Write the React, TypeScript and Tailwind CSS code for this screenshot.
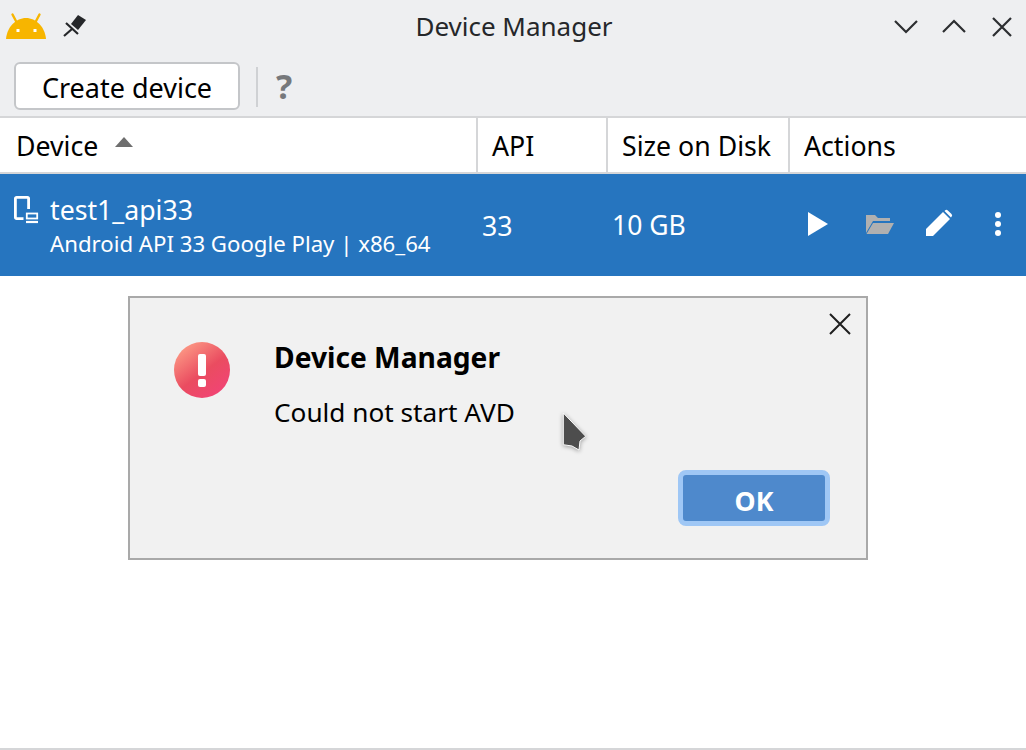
import React from 'react';

const AndroidLogo = () => (
  <svg width="42" height="30" viewBox="0 0 42 30" className="block">
    <path d="M0 30 C1 18 10 9 20 9 C30 9 39 18 40 30 Z" fill="#f7b500" />
    <path d="M11.5 15 L6.5 5.5 M28.5 15 L33.5 5.5" stroke="#f7b500" strokeWidth="2.4" strokeLinecap="round" />
    <rect x="10.5" y="20" width="3" height="3" fill="#fff" />
    <rect x="27.5" y="20" width="3" height="3" fill="#fff" />
  </svg>
);

const PinIcon = () => (
  <svg width="24" height="24" viewBox="0 0 24 24" className="block">
    <path d="M16 2 L24 7 L16 17 L9 11 Z" fill="#25272a" />
    <path d="M4 10 L16 21 M10 16 L2 23" stroke="#25272a" strokeWidth="2.2" />
  </svg>
);

const DeviceIcon = () => (
  <svg width="26" height="30" viewBox="0 0 26 30" className="block" fill="none" stroke="#fff" strokeWidth="2.8">
    <path d="M10.5 24.6 H3.6 a1.2 1.2 0 0 1 -1.2 -1.2 V4.6 a1.2 1.2 0 0 1 1.2 -1.2 H14.4 a1.2 1.2 0 0 1 1.2 1.2 V15" />
    <rect x="13.8" y="19.5" width="10.4" height="5" strokeWidth="1.8" />
    <path d="M13 28 H25" strokeWidth="2.2" />
  </svg>
);

const HeaderCell = ({ className, children }: { className: string; children: React.ReactNode }) => (
  <div className={`flex h-[54px] items-center pt-[2px] ${className}`}>{children}</div>
);

const App: React.FC = () => {
  return (
    <div className="relative flex h-[750px] w-[1026px] flex-col overflow-hidden bg-white font-['Noto_Sans',sans-serif] text-black">
      {/* title bar */}
      <div className="relative flex h-[56px] items-center bg-[#eeeff1] pl-[6px] pr-[12px]">
        <div className="mb-[8px]">
          <AndroidLogo />
        </div>
        <div className="mb-[6px] ml-[14px]">
          <PinIcon />
        </div>
        <div className="absolute inset-x-0 top-[9px] pl-[2px] text-center text-[26px] leading-[34px] text-[#25272a]">Device Manager</div>
        <div className="ml-auto mb-[3px] flex items-center gap-[24px]">
          <svg width="24" height="24" viewBox="0 0 24 24" fill="none" stroke="#2c2e31" strokeWidth="2.2"><path d="M1 6 L12 17 L23 6" /></svg>
          <svg width="24" height="24" viewBox="0 0 24 24" fill="none" stroke="#2c2e31" strokeWidth="2.2"><path d="M1 17 L12 6 L23 17" /></svg>
          <svg width="24" height="24" viewBox="0 0 24 24" fill="none" stroke="#2c2e31" strokeWidth="2.2"><path d="M3 3 L21 21 M21 3 L3 21" /></svg>
        </div>
      </div>

      {/* toolbar */}
      <div className="flex h-[60px] items-start bg-[#eeeff1] pl-[14px] pt-[6px]">
        <button className="h-[48px] w-[226px] rounded-[6px] border-2 border-[#c4c6c9] bg-white pt-[2px] text-[27px] leading-none">Create device</button>
        <div className="ml-[16px] mt-[5px] h-[40px] w-[2px] bg-[#cfd1d4]" />
        <div className="ml-[18px] mt-[-1px] text-[34px] font-bold leading-[50px] text-[#76787b]">?</div>
      </div>

      {/* table header */}
      <div className="flex h-[58px] items-center border-y-2 border-[#d5d6d8] text-[26.7px]">
        <HeaderCell className="w-[478px] border-r-2 border-[#d5d6d8] pl-[16px]">
          Device
          <svg width="20" height="12" viewBox="0 0 20 12" className="mb-[8px] ml-[16px]"><path d="M10 1 L19 11 H1 Z" fill="#6e6e6e" /></svg>
        </HeaderCell>
        <HeaderCell className="w-[130px] border-r-2 border-[#d5d6d8] pl-[14px]">API</HeaderCell>
        <HeaderCell className="w-[182px] border-r-2 border-[#d5d6d8] pl-[14px]">Size on Disk</HeaderCell>
        <HeaderCell className="pl-[14px]">Actions</HeaderCell>
      </div>

      {/* selected row */}
      <div className="flex h-[102px] items-center bg-[#2675bf] text-white">
        <div className="w-[482px] pl-[13px]">
          <div className="flex items-start pt-[4px]">
            <div className="mt-[1px] w-[37px]">
              <DeviceIcon />
            </div>
            <div>
              <div className="text-[26.7px] leading-[34px]">test1_api33</div>
              <div className="text-[22.2px] leading-[34px]">Android API 33 Google Play | x86_64</div>
            </div>
          </div>
        </div>
        <div className="w-[130px] pt-[2px] text-[26.7px]">33</div>
        <div className="w-[193px] pt-[2px] text-[26.5px]">10 GB</div>
        <div className="flex items-center">
          <svg width="24" height="24" viewBox="0 0 24 24" className="mb-[2px] ml-[1px]"><path d="M2 0 L22 12 L2 24 Z" fill="#fff" /></svg>
          <svg width="30" height="22" viewBox="0 0 30 22" className="mb-[2px] ml-[35px]">
            <path d="M1 2 H10 L13 5 H25 V8 H8 L1 20 Z" fill="#b0b0b0" />
            <path d="M8 10 H29 L23 21 H1.5 Z" fill="#b0b0b0" />
          </svg>
          <svg width="28" height="28" viewBox="0 0 28 28" className="mb-[4px] ml-[30px]">
            <path d="M1 27 V20 L18 3 L25 10 L8 27 Z" fill="#fff" />
            <path d="M20 1.5 a2 2 0 0 1 2.8 0 L26.5 5 a2 2 0 0 1 0 2.8 L26 8.5 L19.5 2 Z" fill="#fff" />
          </svg>
          <svg width="8" height="26" viewBox="0 0 8 26" className="mb-[2px] ml-[41px]">
            <circle cx="4" cy="4" r="3" fill="#fff" />
            <circle cx="4" cy="13" r="3" fill="#fff" />
            <circle cx="4" cy="22" r="3" fill="#fff" />
          </svg>
        </div>
      </div>

      {/* bottom line */}
      <div className="absolute inset-x-0 bottom-0 h-[2px] bg-[#d5d6d8]" />

      {/* error dialog */}
      <div className="absolute left-[128px] top-[296px] h-[264px] w-[740px] border-2 border-[#a9a9a9] bg-[#f1f1f1]">
        <svg width="24" height="24" viewBox="0 0 24 24" className="absolute right-[14px] top-[14px]" fill="none" stroke="#1f1f1f" strokeWidth="2"><path d="M2 2 L22 22 M22 2 L2 22" /></svg>
        <svg width="56" height="56" viewBox="0 0 56 56" className="absolute left-[44px] top-[44px]">
          <defs>
            <linearGradient id="err" x1="0.1" y1="0" x2="0.85" y2="1">
              <stop offset="0" stopColor="#ffa48a" />
              <stop offset="0.55" stopColor="#ea4c60" />
              <stop offset="1" stopColor="#f24378" />
            </linearGradient>
          </defs>
          <circle cx="28" cy="28" r="28" fill="url(#err)" />
          <rect x="24" y="12" width="8" height="22" rx="2" fill="#fff" />
          <rect x="24" y="37" width="8" height="8" rx="2" fill="#fff" />
        </svg>
        <div className="pl-[144px] pt-[41px]">
          <div className="text-[28.2px] font-bold leading-[36px]">Device Manager</div>
          <div className="mt-[20px] text-[26.2px] leading-[34px]">Could not start AVD</div>
        </div>
        <button className="absolute left-[548px] top-[172px] h-[56px] w-[152px] rounded-[8px] border-[5px] border-[#9fc7f5] bg-[#4e89cc] pt-[5px] text-[26.7px] font-bold leading-[34px] text-white">OK</button>
        <svg width="30" height="46" viewBox="0 0 30 46" className="absolute left-[431px] top-[114px] drop-shadow-[0_1px_2px_rgba(0,0,0,0.35)]">
          <path d="M2.3 1 L24.7 24.3 L19 29 L18 38 L11 34 L2.3 32.7 Z" fill="#4d4d4d" stroke="#fbfbfb" strokeWidth="1" strokeLinejoin="round" />
        </svg>
      </div>
    </div>
  );
};

export default App;
